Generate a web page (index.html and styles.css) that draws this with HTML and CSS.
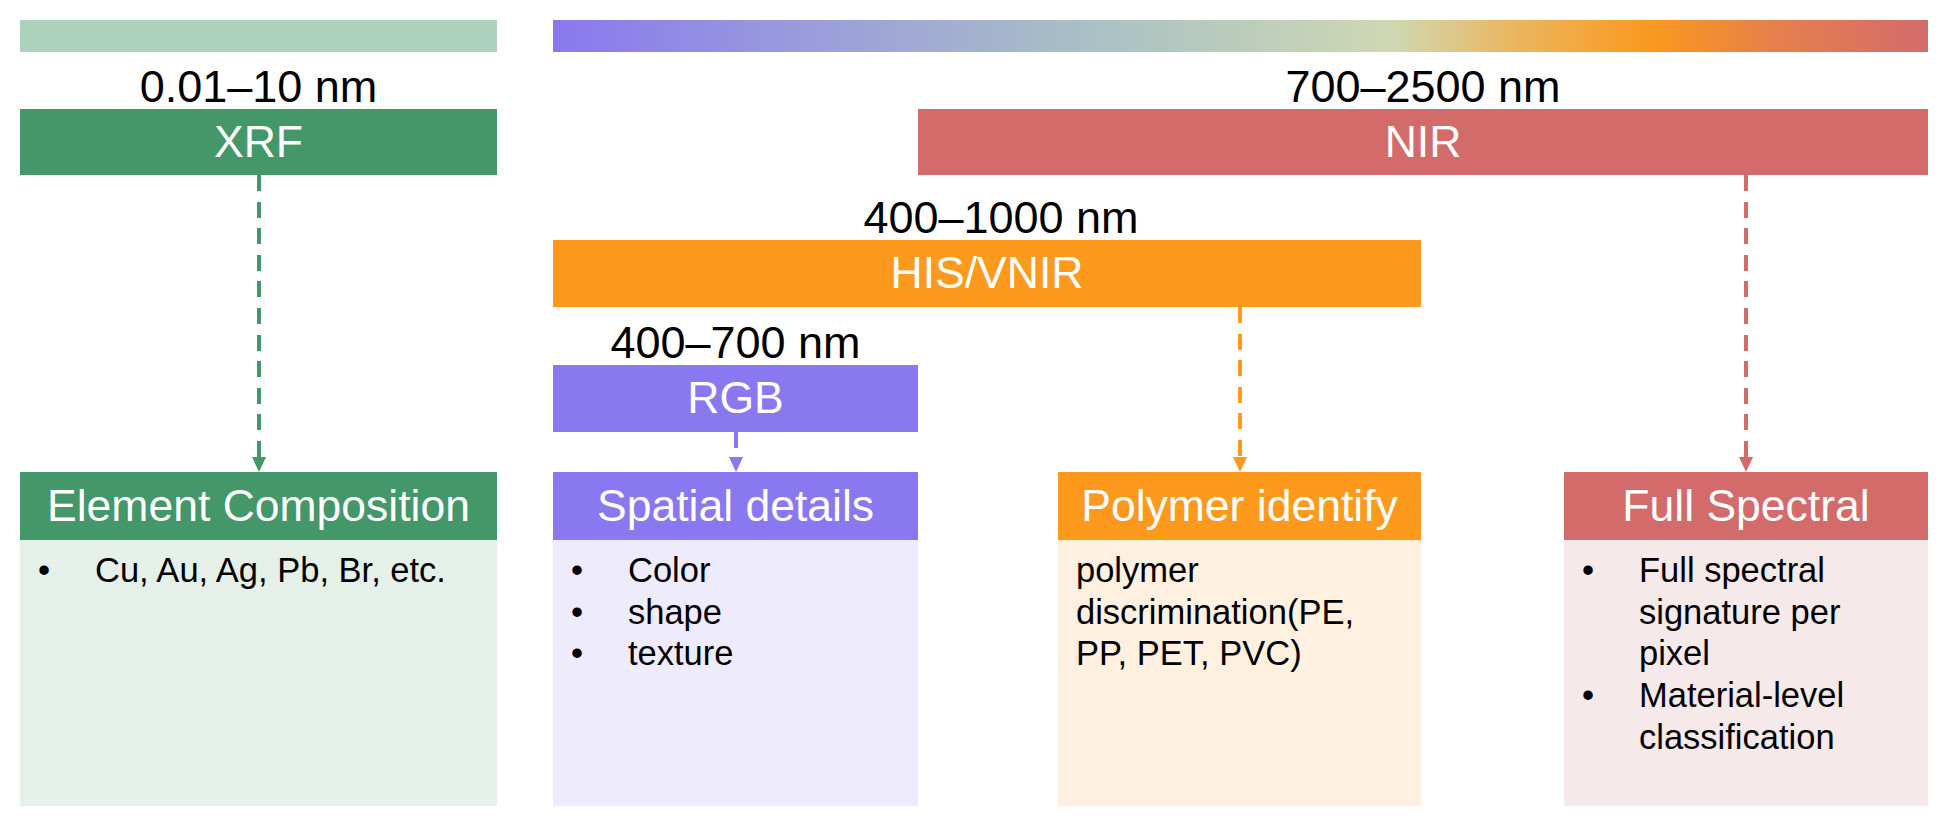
FILE: index.html
```html
<!DOCTYPE html>
<html lang="en">
<head>
<meta charset="utf-8">
<title>Sensing modalities by wavelength</title>
<link rel="stylesheet" href="styles.css">
</head>
<body>
<div class="chart">
  <div class="band band-xray"></div>
  <div class="band band-spectrum"></div>

  <div class="range range-xrf">0.01–10 nm</div>
  <div class="range range-nir">700–2500 nm</div>

  <div class="bar bar-xrf green">XRF</div>
  <div class="bar bar-nir red">NIR</div>

  <div class="range range-his">400–1000 nm</div>
  <div class="bar bar-his orange">HIS/VNIR</div>

  <div class="range range-rgb">400–700 nm</div>
  <div class="bar bar-rgb purple">RGB</div>

  <div class="link link-xrf c-green"><span class="dash"></span><span class="head"></span></div>
  <div class="link link-nir c-red"><span class="dash"></span><span class="head"></span></div>
  <div class="link link-his c-orange"><span class="dash"></span><span class="head"></span></div>
  <div class="link link-rgb c-purple"><span class="dash"></span><span class="head"></span></div>

  <div class="card card-xrf">
    <div class="card-title green">Element Composition</div>
    <div class="card-body bg-green">
      <ul class="bullets">
        <li>Cu, Au, Ag, Pb, Br, etc.</li>
      </ul>
    </div>
  </div>

  <div class="card card-rgb">
    <div class="card-title purple">Spatial details</div>
    <div class="card-body bg-purple">
      <ul class="bullets">
        <li>Color</li>
        <li>shape</li>
        <li>texture</li>
      </ul>
    </div>
  </div>

  <div class="card card-his">
    <div class="card-title orange">Polymer identify</div>
    <div class="card-body bg-orange">
      <p class="plain">polymer discrimination(PE, PP, PET, PVC)</p>
    </div>
  </div>

  <div class="card card-nir">
    <div class="card-title red">Full Spectral</div>
    <div class="card-body bg-red">
      <ul class="bullets">
        <li>Full spectral signature per pixel</li>
        <li>Material-level classification</li>
      </ul>
    </div>
  </div>
</div>
</body>
</html>
```

FILE: styles.css
```css
html, body {
  margin: 0;
  padding: 0;
  background: #ffffff;
}

body {
  font-family: "Liberation Sans", Arial, Helvetica, sans-serif;
  color: #000000;
}

.chart {
  display: grid;
  grid-template-columns: 477px 56px 365px 140px 363px 143px 364px;
  grid-template-rows: 32px 57px 66px 65px 67px 58px 67px 40px 68px 266px;
  padding: 20px 0 0 20px;
  width: 1908px;
}

/* colours */
.green  { background: #449769; }
.red    { background: #d36b6b; }
.orange { background: #fd991d; }
.purple { background: #8a78f0; }

.bg-green  { background: #e5f0e8; }
.bg-red    { background: #f6e9e9; }
.bg-orange { background: #fff0e0; }
.bg-purple { background: #eeebfc; }

.c-green  { color: #449769; }
.c-red    { color: #d36b6b; }
.c-orange { color: #fd991d; }
.c-purple { color: #8a78f0; }

/* top spectrum bands */
.band-xray {
  grid-column: 1;
  grid-row: 1;
  background: #acd2be;
}

.band-spectrum {
  grid-column: 3 / 8;
  grid-row: 1;
  background: linear-gradient(to right,
    #8a78ef 0%,
    #9c9fda 20%,
    #aac2c4 40%,
    #cfd8b3 61%,
    #ebb65e 70%,
    #fb981e 80%,
    #e67f4c 89%,
    #d36b6b 100%);
}

/* wavelength labels */
.range {
  font-size: 45px;
  line-height: 45px;
  text-align: center;
  align-self: end;
  white-space: nowrap;
}

.range-xrf { grid-column: 1; grid-row: 2; }
.range-nir { grid-column: 4 / 8; grid-row: 2; }
.range-his { grid-column: 3 / 6; grid-row: 4; padding-left: 28px; }
.range-rgb { grid-column: 3; grid-row: 6; }

/* modality bars */
.bar {
  display: flex;
  align-items: center;
  justify-content: center;
  color: #ffffff;
  font-size: 44.5px;
  line-height: 1;
}

.bar-xrf { grid-column: 1; grid-row: 3; }
.bar-nir { grid-column: 4 / 8; grid-row: 3; }
.bar-his { grid-column: 3 / 6; grid-row: 5; }
.bar-rgb { grid-column: 3; grid-row: 7; }

/* dashed connectors */
.link {
  display: flex;
  flex-direction: column;
  align-items: center;
}

.link .dash {
  flex: 1;
  width: 4px;
  background: repeating-linear-gradient(to bottom,
    currentColor 0, currentColor 16px,
    transparent 16px, transparent 26.6px);
}

.link .head {
  width: 0;
  height: 0;
  border-left: 7px solid transparent;
  border-right: 7px solid transparent;
  border-top: 15px solid currentColor;
}

.link-xrf { grid-column: 1; grid-row: 4 / 9; }
.link-nir { grid-column: 7; grid-row: 4 / 9; }
.link-his { grid-column: 5; grid-row: 6 / 9; }
.link-rgb { grid-column: 3; grid-row: 8; }

/* cards */
.card {
  display: flex;
  flex-direction: column;
  grid-row: 9 / 11;
}

.card-xrf { grid-column: 1; }
.card-rgb { grid-column: 3; }
.card-his { grid-column: 5; }
.card-nir { grid-column: 7; }

.card-title {
  height: 68px;
  flex: none;
  display: flex;
  align-items: center;
  justify-content: center;
  color: #ffffff;
  font-size: 44.5px;
  line-height: 1;
  white-space: nowrap;
}

.card-body {
  flex: 1;
  padding: 10px 30px 0 18px;
  font-size: 34.5px;
  line-height: 41.7px;
}

.bullets {
  list-style: none;
  margin: 0;
  padding: 0;
}

.bullets li {
  display: flex;
}

.bullets li::before {
  content: "•";
  flex: none;
  width: 57px;
}

.plain {
  margin: 0;
}
```
